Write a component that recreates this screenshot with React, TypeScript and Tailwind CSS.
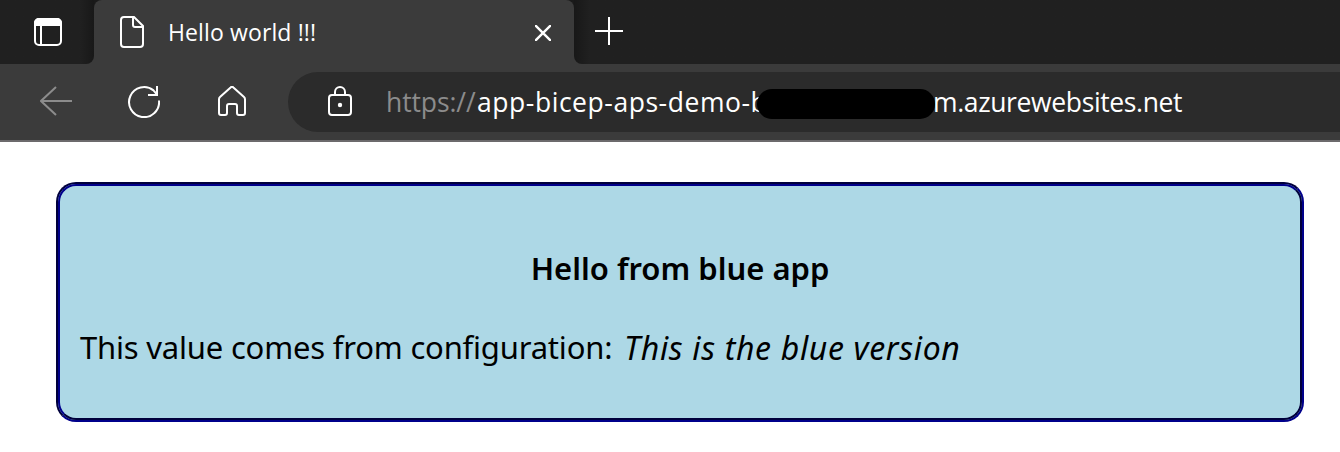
import React from "react";

const ui = "font-['Open_Sans','Noto_Sans',sans-serif]";

export default function App() {
  return (
    <div className={`h-[452px] w-[1340px] overflow-hidden bg-white ${ui}`}>
      <header>
        <div className="flex h-16 bg-[#3b3b3b]">
          <div className="h-16 w-[94px] rounded-br-lg bg-[#202020] bg-linear-to-r from-[#202020] from-85% to-[#181818] pt-[18px] pl-[34px]">
            <svg width="28" height="28" viewBox="0 0 28 28" fill="none" stroke="#fff" strokeWidth="2">
              <rect x="1" y="1" width="26" height="26" rx="4" />
              <path d="M1 7V5a4 4 0 0 1 4-4h18a4 4 0 0 1 4 4v2z" fill="#fff" />
              <path d="M7 8v19" />
            </svg>
          </div>
          <div className="h-16 w-[480px] bg-[#1a1a1a]">
            <div className="flex h-16 items-center rounded-t-lg bg-[#3b3b3b] pr-[23px] pl-[26px]">
              <svg width="24" height="32" viewBox="0 0 24 32" fill="none" stroke="#fff" strokeWidth="2">
                <path d="M4 1h10l9 9v18a3 3 0 0 1-3 3H4a3 3 0 0 1-3-3V4a3 3 0 0 1 3-3z" />
                <path d="M13 1v8a2 2 0 0 0 2 2h8" />
              </svg>
              <span className="ml-6 text-[23px] leading-8 tracking-[0.12px] whitespace-nowrap text-white">Hello world !!!</span>
              <svg className="mt-[2px] ml-auto" width="16" height="16" viewBox="0 0 16 16" stroke="#fff" strokeWidth="2.4">
                <path d="M0 0l16 16M16 0L0 16" />
              </svg>
            </div>
          </div>
          <div className="h-16 flex-1 rounded-bl-lg bg-[#202020] bg-linear-to-r from-[#181818] to-[#202020] to-2% pt-[17px] pl-[21px]">
            <svg width="28" height="28" viewBox="0 0 28 28" stroke="#fff" strokeWidth="2">
              <path d="M14 0v28M0 14h28" />
            </svg>
          </div>
        </div>
        <div className="flex h-[78px] items-start border-b-2 border-[#6c6a6c] bg-[#3b3b3b] pt-2">
          <div className="flex w-[288px] pt-[14px] pl-10">
            <svg width="32" height="32" viewBox="0 0 32 32" fill="none" stroke="#8c8c8c" strokeWidth="2">
              <path d="M32 15H1M16 1L1 15l15 14" />
            </svg>
            <svg className="ml-14" width="32" height="32" viewBox="0 0 32 32" fill="none" stroke="#fff" strokeWidth="2">
              <path d="M31 14.500A15 15 0 1 1 25.500 4.400L29 8.500" />
              <path d="M29 0v9h-9" />
            </svg>
            <svg className="ml-[58px]" width="28" height="32" viewBox="0 0 28 32" fill="none" stroke="#fff" strokeWidth="2">
              <path d="M12.600 1.500a2 2 0 0 1 2.800 0L26 11a3 3 0 0 1 1 2.200V27a2 2 0 0 1-2 2h-4a2 2 0 0 1-2-2v-7a2 2 0 0 0-2-2h-6a2 2 0 0 0-2 2v7a2 2 0 0 1-2 2H3a2 2 0 0 1-2-2V13.200A3 3 0 0 1 2 11z" />
            </svg>
          </div>
          <div className="flex h-[60px] flex-1 items-center rounded-l-full bg-[#2b2b2b] pl-10">
            <svg width="24" height="32" viewBox="0 0 24 32" fill="none" stroke="#fff" strokeWidth="2">
              <rect x="1" y="9" width="22" height="20" rx="3" />
              <path d="M7 9V6a5 5 0 0 1 10 0V9" />
              <circle cx="12" cy="19" r="2.200" fill="#fff" stroke="none" />
            </svg>
            <div className="ml-[34px] flex items-center text-[26.5px] leading-[60px] whitespace-nowrap text-white">
              <span className="w-[91px] tracking-[-0.1px] text-[#8c8c8c]">https://</span>
              <span className="w-[280px] tracking-[0.55px]">app-bicep-aps-demo-b</span>
              <span className="relative top-[2px] h-[30px] w-[178px] rounded-full bg-black" />
              <span className="-ml-[2px] tracking-[-0.36px]">m.azurewebsites.net</span>
            </div>
          </div>
        </div>
      </header>
      <main className="pt-10 pr-9 pl-14">
        <section className="h-60 rounded-[20px] border-2 border-t-[#00003c] border-r-[#00008b] border-b-[#00008b] border-l-[#00003c] bg-[#add8e6]">
          <div className="h-full rounded-[18px] border-2 border-t-[#00008b] border-r-[#00003c] border-b-[#00003c] border-l-[#00008b] px-5 pt-[58px] font-['Noto_Sans',sans-serif] text-[31px] text-black">
            <h1 className="text-center leading-[48px] font-semibold whitespace-nowrap">Hello from blue app</h1>
            <p className="mt-[31px] flex leading-[48px] whitespace-nowrap">
              <span className="w-[544px] tracking-[-0.2px]">This value comes from configuration:</span>
              <em className="text-[32px] leading-[50px] tracking-[0.66px]">This is the blue version</em>
            </p>
          </div>
        </section>
      </main>
    </div>
  );
}
